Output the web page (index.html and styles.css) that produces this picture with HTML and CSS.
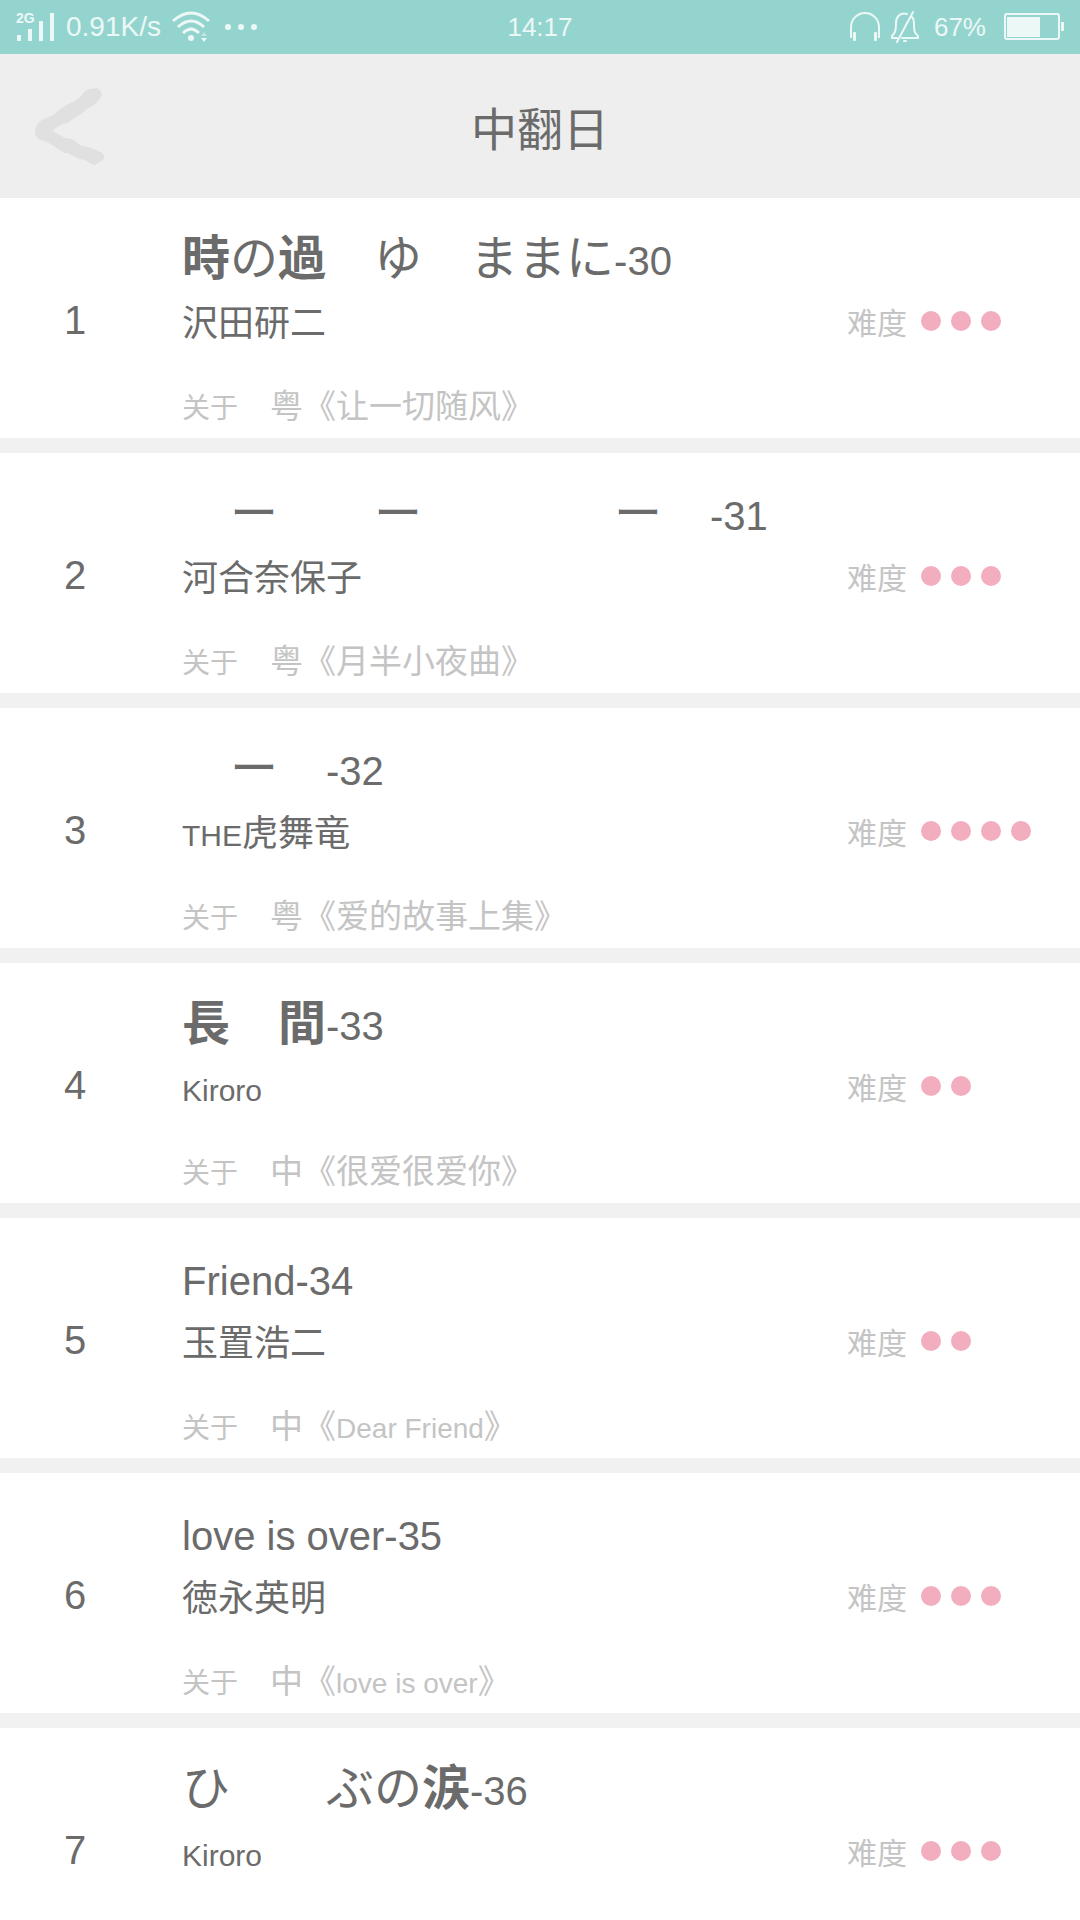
FILE: index.html
```html
<!DOCTYPE html>
<html lang="zh-CN">
<head>
<meta charset="utf-8">
<meta name="viewport" content="width=device-width, initial-scale=1">
<title>中翻日</title>
<link rel="stylesheet" href="styles.css">
</head>
<body>
<div class="app">
  <div class="status">
    <div class="status-side">
      <svg width="40" height="32" viewBox="0 0 40 32" aria-hidden="true">
        <text class="network" x="0" y="12">2G</text>
        <path d="M1 24h4v6H1zM12 18h4v12h-4zM23 10h4v20h-4zM34 2h4v28h-4z" fill="currentColor"/>
      </svg>
      <span class="speed">0.91K/s</span>
      <svg class="wifi" width="40" height="32" viewBox="0 0 40 32" aria-hidden="true">
        <g fill="none" stroke="currentColor" stroke-width="3">
          <path d="M2 10Q20 -6 38 10"/><path d="M7 16Q20 4 33 16"/><path d="M12 22Q20 14 28 22"/>
        </g>
        <circle cx="20" cy="27" r="3" fill="currentColor"/>
        <path d="M30 25l3-4 3 4z" fill="currentColor" opacity=".5"/><path d="M30 27h6l-3 4z" fill="currentColor"/>
      </svg>
      <svg width="32" height="8" viewBox="0 0 32 8" aria-hidden="true">
        <g fill="currentColor"><circle cx="3" cy="4" r="3"/><circle cx="16" cy="4" r="3"/><circle cx="29" cy="4" r="3"/></g>
      </svg>
    </div>
    <span class="clock">14:17</span>
    <div class="status-side status-end">
      <svg width="30" height="30" viewBox="0 0 30 30" aria-hidden="true">
        <path d="M1 26V15a14 14 0 0 1 28 0v11" fill="none" stroke="currentColor" stroke-width="2"/>
        <rect x="3" y="20" width="3" height="9" rx="1" fill="currentColor"/><rect x="24" y="20" width="3" height="9" rx="1" fill="currentColor"/>
      </svg>
      <svg width="30" height="32" viewBox="0 0 30 32" aria-hidden="true">
        <g fill="none" stroke="currentColor" stroke-width="2" stroke-linecap="round">
          <path d="M17 3C10 1 6 6 6 12c0 8-1 10-4 13v2h5M12 27h16v-2c-4-3-4-6-4-13 0-3-1-5-2-6M7 31L23 1"/><path d="M14 30h2"/>
        </g>
      </svg>
      <span class="charge">67%</span>
      <svg width="60" height="28" viewBox="0 0 60 28" aria-hidden="true">
        <rect x="1" y="1" width="54" height="25" rx="2" fill="none" stroke="currentColor" stroke-width="2"/>
        <path d="M3 4h33v20H3zM57 9h3v9h-3z" fill="currentColor"/>
      </svg>
    </div>
  </div>

  <header class="bar">
    <button class="back" type="button" aria-label="返回">
      <svg width="76" height="80" viewBox="0 0 76 80" aria-hidden="true">
        <path d="M53 5L57 3L65 2Q69 4 70 9L68 13L62 19L55 23L49 28L41 33L36 37L31 38L22 43L21 45L26 48L33 52L40 53L48 59L52 60L62 63L70 67Q74 70 71 74L67 76L63 79L59 78L55 75L45 72L36 67L32 67L25 62L20 59L15 56L6 53L3 48L3 43L6 37L10 34L17 31L23 28L28 23L36 18L43 15L48 11Z" fill="#e0e0e0"/>
      </svg>
    </button>
    <h1 class="heading">中翻日</h1>
  </header>

  <ol class="songs">
    <li class="song">
      <span class="rank">1</span>
      <div class="info">
        <h2 class="title"><b>時</b>の<b>過</b>　ゆ　ままに<span class="latin">-30</span></h2>
        <p class="artist">沢田研二</p>
        <p class="about"><span class="label">关于</span><span>粤《让一切随风》</span></p>
      </div>
      <div class="level"><span>难度</span><i class="dot"></i><i class="dot"></i><i class="dot"></i></div>
    </li>
    <li class="song">
      <span class="rank">2</span>
      <div class="info">
        <h2 class="title">　ー　　ー　　　　ー　<span class="latin">-31</span></h2>
        <p class="artist">河合奈保子</p>
        <p class="about"><span class="label">关于</span><span>粤《月半小夜曲》</span></p>
      </div>
      <div class="level"><span>难度</span><i class="dot"></i><i class="dot"></i><i class="dot"></i></div>
    </li>
    <li class="song">
      <span class="rank">3</span>
      <div class="info">
        <h2 class="title">　ー　<span class="latin">-32</span></h2>
        <p class="artist"><span class="latin">THE</span>虎舞竜</p>
        <p class="about"><span class="label">关于</span><span>粤《爱的故事上集》</span></p>
      </div>
      <div class="level"><span>难度</span><i class="dot"></i><i class="dot"></i><i class="dot"></i><i class="dot"></i></div>
    </li>
    <li class="song">
      <span class="rank">4</span>
      <div class="info">
        <h2 class="title"><b>長</b>　<b>間</b><span class="latin">-33</span></h2>
        <p class="artist"><span class="latin">Kiroro</span></p>
        <p class="about"><span class="label">关于</span><span>中《很爱很爱你》</span></p>
      </div>
      <div class="level"><span>难度</span><i class="dot"></i><i class="dot"></i></div>
    </li>
    <li class="song">
      <span class="rank">5</span>
      <div class="info">
        <h2 class="title"><span class="latin">Friend-34</span></h2>
        <p class="artist">玉置浩二</p>
        <p class="about"><span class="label">关于</span><span>中《<span class="latin">Dear Friend</span>》</span></p>
      </div>
      <div class="level"><span>难度</span><i class="dot"></i><i class="dot"></i></div>
    </li>
    <li class="song">
      <span class="rank">6</span>
      <div class="info">
        <h2 class="title"><span class="latin">love is over-35</span></h2>
        <p class="artist">徳永英明</p>
        <p class="about"><span class="label">关于</span><span>中《<span class="latin">love is over</span>》</span></p>
      </div>
      <div class="level"><span>难度</span><i class="dot"></i><i class="dot"></i><i class="dot"></i></div>
    </li>
    <li class="song">
      <span class="rank">7</span>
      <div class="info">
        <h2 class="title">ひ　　ぶの<b>涙</b><span class="latin">-36</span></h2>
        <p class="artist"><span class="latin">Kiroro</span></p>
      </div>
      <div class="level"><span>难度</span><i class="dot"></i><i class="dot"></i><i class="dot"></i></div>
    </li>
  </ol>
</div>
</body>
</html>
```
FILE: styles.css
```css
* {
  box-sizing: border-box;
}

body {
  margin: 0;
  background: #fff;
  color: #6b6b6b;
  font-family: "Noto Sans CJK SC", sans-serif;
}

h1,
h2,
p {
  margin: 0;
  font-weight: 400;
}

svg {
  display: block;
  flex: none;
}

.app {
  display: flex;
  flex-direction: column;
  height: 100vh;
}

.status {
  display: grid;
  grid-template-columns: 1fr auto 1fr;
  align-items: center;
  flex: none;
  height: 54px;
  padding: 0 16px;
  background: #94d4cf;
  color: #ecf8f6;
  font-family: "Liberation Sans", sans-serif;
  font-size: 26px;
  line-height: 40px;
}

.status-side {
  display: flex;
  align-items: center;
  gap: 10px;
}

.status-end {
  justify-content: flex-end;
}

.network {
  fill: currentColor;
  font: 700 14px "Liberation Sans", sans-serif;
}

.speed {
  font-size: 28px;
}

.wifi {
  margin-right: 4px;
}

.charge {
  margin: 0 8px 0 4px;
}

.bar {
  display: grid;
  grid-template-columns: 1fr auto 1fr;
  align-items: center;
  flex: none;
  height: 144px;
  background: #eee;
}

.back {
  justify-self: start;
  margin: 0;
  padding: 0 32px;
  border: 0;
  background: none;
}

.heading {
  font-size: 46px;
  line-height: 72px;
}

.songs {
  flex: 1;
  min-height: 0;
  margin: 0;
  padding: 0;
  overflow: hidden;
  list-style: none;
}

.song {
  display: grid;
  grid-template-columns: 150px 1fr 233px;
  height: 255px;
  padding-top: 20px;
  border-bottom: 15px solid #f1f1f1;
}

.rank {
  padding-top: 72px;
  font-family: "Liberation Sans", sans-serif;
  font-size: 40px;
  line-height: 60px;
  text-align: center;
}

.info {
  padding-left: 32px;
  white-space: nowrap;
}

.latin {
  font-family: "Liberation Sans", sans-serif;
}

.title {
  height: 72px;
  font-family: "Noto Sans CJK JP", sans-serif;
  font-size: 48px;
  line-height: 72px;
}

.title b {
  font-weight: 700;
}

.title .latin {
  font-size: 40px;
}

.artist {
  height: 60px;
  font-family: "Noto Sans CJK JP", sans-serif;
  font-size: 36px;
  line-height: 60px;
}

.artist .latin {
  font-size: 30px;
}

.about {
  display: flex;
  align-items: baseline;
  gap: 32px;
  margin-top: 30px;
  color: #c4c4c4;
  font-size: 33px;
  line-height: 48px;
}

.about .label,
.about .latin {
  font-size: 28px;
}

.level {
  display: flex;
  align-items: center;
  gap: 10px;
  height: 60px;
  margin-top: 73px;
  color: #c4c4c4;
  font-size: 30px;
}

.level span {
  margin-right: 4px;
}

.dot {
  width: 20px;
  height: 20px;
  border-radius: 50%;
  background: #f2aebf;
}
```
